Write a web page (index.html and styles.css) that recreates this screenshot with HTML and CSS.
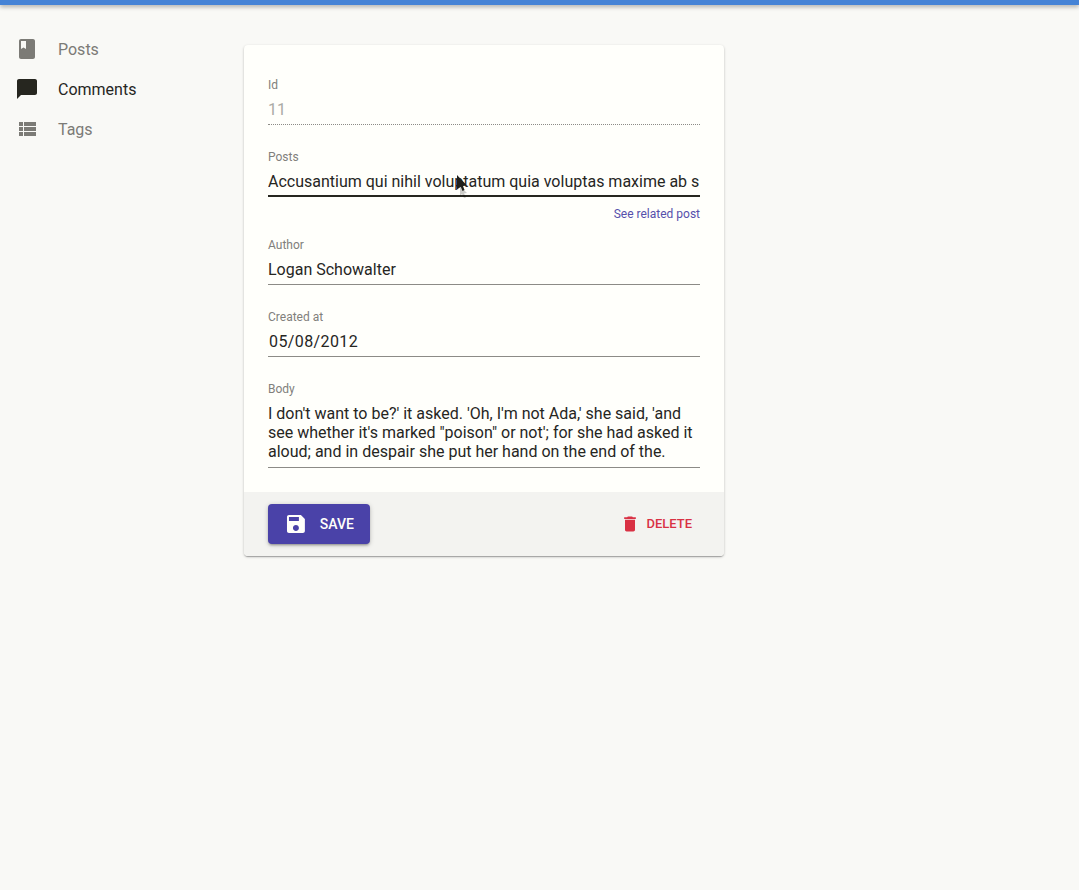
FILE: index.html
```html
<!DOCTYPE html>
<html lang="en">
<head>
<meta charset="utf-8">
<title>Comment</title>
<link rel="stylesheet" href="styles.css">
</head>
<body>
<header class="appbar"></header>
<div class="layout">
  <nav class="menu">
    <a class="menu-item">
      <svg class="menu-icon" viewBox="0 0 24 24"><path d="M18 2H6c-1.1 0-2 .9-2 2v16c0 1.1.9 2 2 2h12c1.1 0 2-.9 2-2V4c0-1.1-.9-2-2-2zM6 4h5v8l-2.5-1.5L6 12V4z"/></svg>
      <span>Posts</span>
    </a>
    <a class="menu-item active">
      <svg class="menu-icon" viewBox="0 0 24 24"><path d="M20 2H4c-1.1 0-2 .9-2 2v18l4-4h14c1.1 0 2-.9 2-2V4c0-1.1-.9-2-2-2z"/></svg>
      <span>Comments</span>
    </a>
    <a class="menu-item">
      <svg class="menu-icon" viewBox="0 0 24 24"><path d="M4 14h4v-4H4v4zm0 5h4v-4H4v4zM4 9h4V5H4v4zm5 5h12v-4H9v4zm0 5h12v-4H9v4zM9 5v4h12V5H9z"/></svg>
      <span>Tags</span>
    </a>
  </nav>
  <main class="card">
    <form class="form">
      <div class="field">
        <div class="label">Id</div>
        <div class="value disabled">11</div>
      </div>
      <div class="field field-ref">
        <div class="label">Posts</div>
        <div class="value focused">Accusantium qui nihil voluptatum quia voluptas maxime ab s</div>
        <a class="helper">See related post</a>
        <svg class="cursor" viewBox="0 0 14 24" width="14" height="24"><path class="cursor-shadow" d="M4 12l7 7-3 .5 2 4-2 .5-2-4-2 2z"/><path class="cursor-arrow" d="M1 1l10 10.500-4 .5 1.500 4-2 1-1.700-4.200L1 15.500z"/></svg>
      </div>
      <div class="field">
        <div class="label">Author</div>
        <div class="value">Logan Schowalter</div>
      </div>
      <div class="field">
        <div class="label">Created at</div>
        <div class="value date">05/08/2012</div>
      </div>
      <div class="field">
        <div class="label">Body</div>
        <div class="value multiline">I don't want to be?' it asked. 'Oh, I'm not Ada,' she said, 'and see whether it's marked "poison" or not'; for she had asked it aloud; and in despair she put her hand on the end of the.</div>
      </div>
    </form>
    <div class="toolbar">
      <button class="btn-save" type="button">
        <svg class="save-icon" viewBox="0 0 24 24"><path d="M17 3H5c-1.11 0-2 .9-2 2v14c0 1.1.89 2 2 2h14c1.1 0 2-.9 2-2V7l-4-4zm-5 16c-1.66 0-3-1.34-3-3s1.34-3 3-3 3 1.34 3 3-1.34 3-3 3zm3-10H5V5h10v4z"/></svg>
        <span>SAVE</span>
      </button>
      <button class="btn-delete" type="button">
        <svg class="delete-icon" viewBox="0 0 24 24"><path d="M6 19c0 1.1.9 2 2 2h8c1.1 0 2-.9 2-2V7H6v12zM19 4h-3.500l-1-1h-5l-1 1H5v2h14V4z"/></svg>
        <span class="delete-text">DELETE</span>
      </button>
    </div>
  </main>
</div>
</body>
</html>
```
FILE: styles.css
```css
* { box-sizing: border-box; }
html, body { height: 100%; }
body {
  margin: 0;
  background: #f9f9f6;
  color: #26261f;
  font-family: Roboto, "Liberation Sans", sans-serif;
  font-size: 16px;
  overflow: hidden;
}
.appbar {
  height: 5px;
  background: #4583d6;
  box-shadow: 0 2px 4px rgba(0, 0, 0, .3);
}
.layout {
  display: flex;
  align-items: flex-start;
}
.menu {
  width: 244px;
  flex: none;
  padding-top: 24px;
}
.menu-item {
  display: flex;
  align-items: center;
  gap: 19px;
  height: 40px;
  padding-left: 15px;
  color: #7c7b76;
  line-height: 19px;
}
.menu-item.active { color: #26261f; }
.menu-icon {
  width: 24px;
  height: 24px;
  fill: currentColor;
  flex: none;
}
.card {
  width: 480px;
  margin-top: 40px;
  background: #fffffb;
  border-radius: 4px;
  overflow: hidden;
  box-shadow: 0 1px 3px rgba(0, 0, 0, .2), 0 1px 1px rgba(0, 0, 0, .14), 0 2px 1px -1px rgba(0, 0, 0, .12);
}
.form {
  display: flex;
  flex-direction: column;
  gap: 25px;
  padding: 33px 24px 24px;
}
.field { position: relative; }
.field-ref { margin-bottom: -8px; }
.label {
  font-size: 12px;
  line-height: 14px;
  color: #81807b;
}
.value {
  margin-top: 8px;
  padding-bottom: 5px;
  line-height: 19px;
  border-bottom: 1px solid #8c8b86;
  white-space: nowrap;
  overflow: hidden;
}
.value.disabled {
  color: #abaaa5;
  border-bottom: 1px dotted #8c8b86;
}
.value.focused {
  padding-bottom: 4px;
  border-bottom: 2px solid #26261f;
}
.value.date {
  padding-left: 1px;
  letter-spacing: .4px;
}
.value.multiline {
  white-space: normal;
  padding-bottom: 6px;
}
.helper {
  display: block;
  margin-top: 10px;
  font-size: 12px;
  line-height: 14px;
  color: #5650ab;
  text-align: right;
}
.cursor {
  position: absolute;
  left: 188px;
  top: 24px;
}
.cursor-arrow { fill: #1f1f1a; }
.cursor-shadow { fill: rgba(0, 0, 0, .2); }
.toolbar {
  display: flex;
  align-items: center;
  justify-content: space-between;
  height: 64px;
  padding: 0 24px;
  background: #f3f3f0;
}
button {
  font-family: inherit;
  border: 0;
  display: flex;
  align-items: center;
  cursor: pointer;
}
.btn-save {
  width: 102px;
  height: 40px;
  padding: 0 16px;
  gap: 12px;
  background: #4a42a8;
  color: #fffffb;
  font-size: 14px;
  font-weight: 500;
  border-radius: 4px;
  box-shadow: 0 1px 5px rgba(0, 0, 0, .2), 0 2px 2px rgba(0, 0, 0, .14), 0 3px 1px -2px rgba(0, 0, 0, .12);
}
.save-icon {
  width: 24px;
  height: 24px;
  fill: currentColor;
}
.btn-delete {
  height: 32px;
  padding: 0 8px;
  gap: 6px;
  background: transparent;
  color: #d93144;
  font-size: 13px;
  font-weight: 500;
}
.delete-text {
  line-height: 15px;
  margin-bottom: 2px;
}
.delete-icon {
  width: 20px;
  height: 20px;
  fill: currentColor;
}
```
